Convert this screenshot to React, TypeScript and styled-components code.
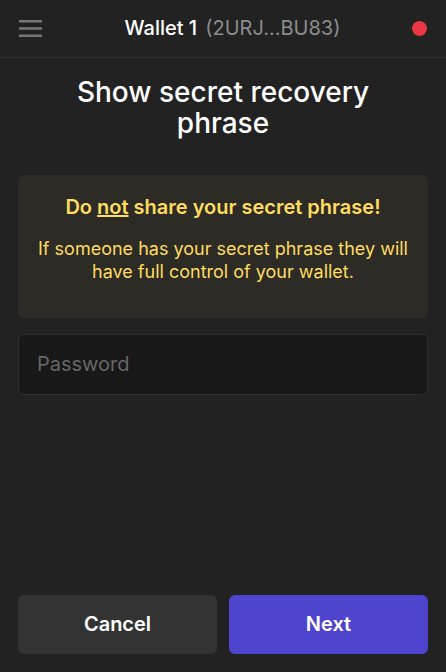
import React, { useState } from "react";
import styled, { createGlobalStyle } from "styled-components";

const GlobalStyle = createGlobalStyle`
  *, *::before, *::after { box-sizing: border-box; }
  body {
    margin: 0;
    background: #222222;
    color: #ffffff;
    font-family: Inter, "Liberation Sans", sans-serif;
  }
`;

const Page = styled.form`
  display: flex;
  flex-direction: column;
  min-height: 100vh;
`;

const TopBar = styled.header`
  display: grid;
  grid-template-columns: 35px 1fr 15px;
  align-items: center;
  height: 58px;
  padding: 0 19px 0 18px;
  border-bottom: 1px solid #343434;
`;

const MenuButton = styled.button`
  display: flex;
  justify-self: start;
  padding: 0;
  border: 0;
  background: none;
  color: #777777;
  cursor: pointer;
`;

const WalletName = styled.div`
  padding-bottom: 2px;
  font-size: 20px;
  line-height: 24px;
  font-weight: 500;
  text-align: center;
`;

const Address = styled.span`
  margin-left: 8px;
  color: #8c8c8c;
  font-weight: 400;
`;

const StatusDot = styled.span`
  width: 15px;
  height: 15px;
  border-radius: 50%;
  background: #eb3742;
`;

const Content = styled.main`
  display: flex;
  flex: 1;
  flex-direction: column;
  padding: 19px 18px 18px;
`;

const Title = styled.h1`
  max-width: 320px;
  margin: 0 auto 36px;
  font-size: 28px;
  line-height: 31px;
  font-weight: 500;
  text-align: center;
`;

const Warning = styled.section`
  margin-bottom: 16px;
  padding: 20px 18px 35px;
  border-radius: 6px;
  background: #2d2b25;
  color: #ffdc62;
  text-align: center;
`;

const WarningTitle = styled.h2`
  margin: 0 0 18px;
  font-size: 20px;
  line-height: 24px;
  font-weight: 600;
`;

const WarningText = styled.p`
  margin: 0;
  font-size: 18px;
  line-height: 23px;
`;

const PasswordInput = styled.input`
  width: 100%;
  height: 61px;
  padding: 0 18px 2px;
  border: 1px solid #2f2f2f;
  border-radius: 6px;
  background: #181818;
  color: #ffffff;
  font: 400 20px Inter, "Liberation Sans", sans-serif;

  &::placeholder { color: #666666; opacity: 1; }
`;

const Actions = styled.div`
  display: grid;
  grid-template-columns: 1fr 1fr;
  gap: 12px;
  margin-top: auto;
`;

const ActionButton = styled.button<{ $primary?: boolean }>`
  height: 59px;
  padding: 0 18px 2px;
  border: 0;
  border-radius: 6px;
  background: ${({ $primary }) => ($primary ? "#4e44ce" : "#333333")};
  color: #ffffff;
  font: 600 20px Inter, "Liberation Sans", sans-serif;
  cursor: pointer;
`;

export default function App() {
  const [password, setPassword] = useState("");
  return (
    <>
      <GlobalStyle />
      <Page onSubmit={(event) => event.preventDefault()}>
        <TopBar>
          <MenuButton type="button" aria-label="Menu">
            <svg width="25" height="17" viewBox="0 0 25 17" fill="currentColor" aria-hidden="true">
              <path d="M1 0h23v2.5H1zM1 7.2h23v2.5H1zM1 14.4h23v2.5H1z" />
            </svg>
          </MenuButton>
          <WalletName>
            Wallet 1<Address>(2URJ...BU83)</Address>
          </WalletName>
          <StatusDot role="img" aria-label="Disconnected" />
        </TopBar>
        <Content>
          <Title>Show secret recovery phrase</Title>
          <Warning>
            <WarningTitle>
              Do <u>not</u> share your secret phrase!
            </WarningTitle>
            <WarningText>
              If someone has your secret phrase they will have full control of your wallet.
            </WarningText>
          </Warning>
          <PasswordInput
            type="password"
            aria-label="Password"
            placeholder="Password"
            autoComplete="current-password"
            value={password}
            onChange={(event) => setPassword(event.target.value)}
          />
          <Actions>
            <ActionButton type="button">Cancel</ActionButton>
            <ActionButton type="submit" $primary>
              Next
            </ActionButton>
          </Actions>
        </Content>
      </Page>
    </>
  );
}
